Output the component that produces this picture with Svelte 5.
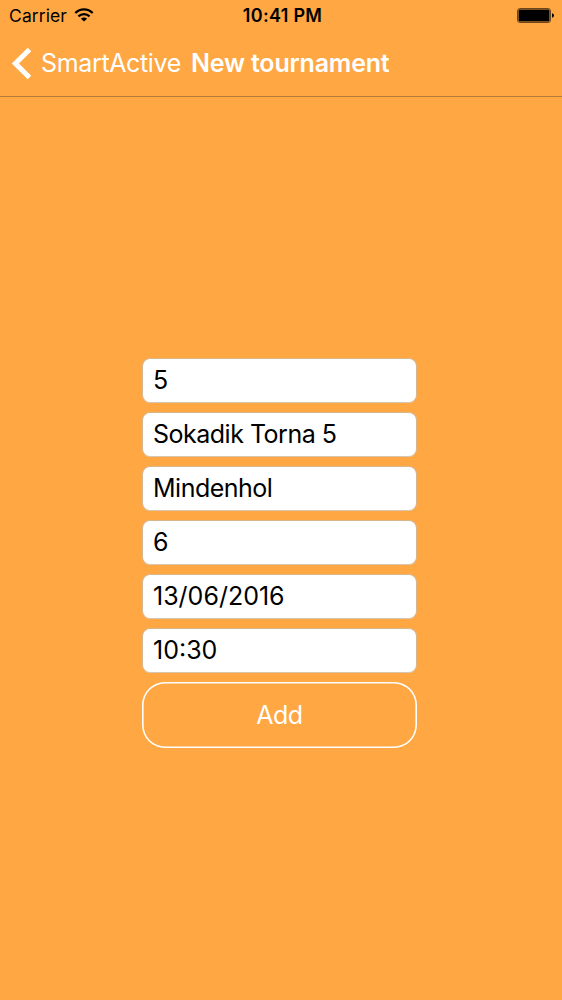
<script>
  let fields = $state([
    { name: 'id', value: '5' },
    { name: 'title', value: 'Sokadik Torna 5' },
    { name: 'place', value: 'Mindenhol' },
    { name: 'teams', value: '6' },
    { name: 'date', value: '13/06/2016' },
    { name: 'time', value: '10:30' }
  ]);
</script>

<div class="screen">
  <header>
    <div class="status">
      <div class="network">
        <span class="carrier">Carrier</span>
        <svg class="wifi" width="20" height="14" viewBox="0 0 20 14">
          <g fill="none" stroke="#000" stroke-width="2.2">
            <path d="M1.3 5.1C6.1.2 13.9.2 18.7 5.1" />
            <path d="M4.4 8.4C7.5 5.4 12.5 5.4 15.6 8.4" />
          </g>
          <path d="M6.9 10.7C8.7 9.1 11.3 9.1 13.1 10.7L10 13.6Z" />
        </svg>
      </div>
      <span class="clock">10:41 PM</span>
      <svg class="battery" width="37" height="16" viewBox="0 0 37 16">
        <rect x=".5" y=".5" width="33" height="14" rx="2.5" fill="none" stroke="#6b461c" />
        <rect x="1.5" y="1.5" width="31" height="12" rx="1.2" />
        <path d="M35 5.2Q37 5.7 37 7.5T35 9.8Z" />
      </svg>
    </div>
    <nav>
      <svg class="back" width="20" height="34" viewBox="0 0 20 34">
        <path d="M17.5 3.4L3.4 17.5L17.5 31.6" fill="none" stroke="#fff" stroke-width="5" />
      </svg>
      <span class="parent">SmartActive</span>
      <h1>New tournament</h1>
    </nav>
  </header>

  <form>
    {#each fields as field (field.name)}
      <input class={field.name} aria-label={field.name} bind:value={field.value} />
    {/each}
    <button type="button">Add</button>
  </form>
</div>

<style>
  :global(body) {
    margin: 0;
    background: #ffa743;
  }
  .screen {
    box-sizing: border-box;
    width: 562px;
    height: 1000px;
    overflow: hidden;
    background: #ffa743;
    font-family: Inter, "Liberation Sans", sans-serif;
    color: #000;
  }
  header {
    box-sizing: border-box;
    height: 97px;
    border-bottom: 1px solid #b37a3a;
  }
  .status {
    display: grid;
    grid-template-columns: 1fr auto 1fr;
    align-items: center;
    height: 31px;
    padding: 0 8px 0 9px;
    font-size: 18px;
    line-height: 31px;
  }
  .network {
    display: flex;
    align-items: center;
    gap: 7px;
  }
  .carrier {
    font-size: 17.5px;
    letter-spacing: 0.1px;
  }
  .wifi {
    margin-top: -2px;
  }
  .clock {
    padding-left: 2px;
    font-weight: 600;
    letter-spacing: 0.3px;
  }
  .battery {
    justify-self: end;
  }
  nav {
    display: flex;
    align-items: center;
    height: 64px;
    padding-left: 12px;
    color: #fff;
    font-size: 25px;
  }
  .parent {
    margin-left: 9px;
    letter-spacing: -0.35px;
  }
  h1 {
    margin: 0 0 0 10px;
    font-size: 25px;
    font-weight: 600;
    letter-spacing: -0.18px;
  }
  form {
    display: flex;
    flex-direction: column;
    gap: 9px;
    width: 275px;
    margin: 261px 0 0 142px;
  }
  input {
    box-sizing: border-box;
    width: 100%;
    height: 45px;
    padding: 0 10px 1px;
    border: 1px solid #d9b78c;
    border-bottom-color: #d8c6ae;
    border-radius: 8px;
    outline: 0;
    background: #fff;
    color: #000;
    font: 25px Inter, "Liberation Sans", sans-serif;
  }
  .title,
  .place {
    letter-spacing: -0.5px;
  }
  button {
    box-sizing: border-box;
    height: 66px;
    padding: 0;
    border: 0;
    border-radius: 23px;
    background: transparent;
    box-shadow: inset 0 0 0 1.6px #fff;
    color: #fff;
    font: 25px Inter, "Liberation Sans", sans-serif;
    letter-spacing: -0.5px;
  }
</style>
